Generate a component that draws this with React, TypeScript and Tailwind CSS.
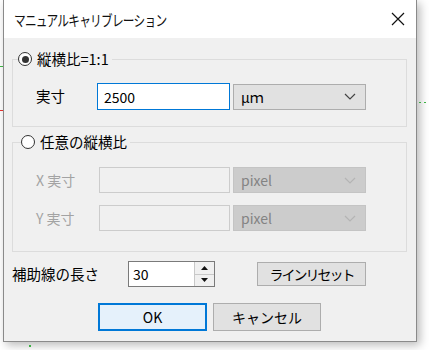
function Radio({ checked }: { checked?: boolean }) {
  return (
    <span className="w-[14px] h-[14px] rounded-full border-[1.5px] border-[#333] bg-white flex items-center justify-center shrink-0">
      {checked && <span className="w-[7px] h-[7px] rounded-full bg-[#333]" />}
    </span>
  );
}

function Chevron({ color }: { color: string }) {
  return (
    <svg width="12" height="7" viewBox="0 0 12 7" fill="none">
      <path d="M1 1l5 5 5-5" stroke={color} strokeWidth="1.2" />
    </svg>
  );
}

function Select({ label, disabled }: { label: string; disabled?: boolean }) {
  return (
    <div
      className={
        disabled
          ? "ml-[3px] w-[133px] h-[26px] bg-[#cccccc] border border-[#c4c4c4] flex items-center justify-between pl-[7px] pr-[9px] text-[14px] text-[#838383]"
          : "ml-[3px] w-[133px] h-[26px] bg-[#e1e1e1] border border-[#adadad] flex items-center justify-between pl-[7px] pr-[9px] text-[14px] text-black"
      }
    >
      <span>{label}</span>
      <Chevron color={disabled ? "#b4b4b4" : "#444"} />
    </div>
  );
}

export default function App() {
  return (
    <div className="relative w-[429px] h-[350px] bg-white overflow-hidden font-['Noto_Sans_CJK_JP',sans-serif] text-black leading-none">
      <div className="absolute left-[0px] top-[66px] w-[3px] h-[1px] bg-[#3cb043]" />
      <div className="absolute left-[0px] top-[110px] w-[3px] h-[1px] bg-[#e0302c]" />
      <div className="absolute left-[29px] top-[345px] w-[2px] h-[2px] bg-[#3cb043]" />
      <div className="absolute left-[419px] top-[102px] w-[2px] h-[1px] bg-[#3cb043]" />
      <div className="absolute left-[424px] top-[102px] w-[2px] h-[1px] bg-[#3cb043]" />

      <div className="ml-[3px] w-[414px] h-[342px] bg-[#f0f0f0] border border-t-0 border-[#8a8a8a] shadow-[3px_3px_9px_rgba(0,0,0,0.28)] flex flex-col">
        <div className="h-[38px] bg-white flex items-center justify-between pl-[10px] pr-[11px]">
          <span className="text-[15px] tracking-[-1px] text-[#111] origin-left scale-x-[0.78] whitespace-nowrap">
            マニュアルキャリブレーション
          </span>
          <svg width="14" height="14" viewBox="0 0 14 14">
            <path d="M1 1l12 12M13 1L1 13" stroke="#111" strokeWidth="1.2" />
          </svg>
        </div>

        <div className="flex-1 pl-[8px] pr-[9px] flex flex-col">
          <fieldset className="mt-[11px] border border-[#dcdcdc] pt-[14px] pb-[16px]">
            <legend className="ml-[5px] pr-[3px]">
              <div className="h-[20px] flex items-center gap-[5px] text-[14.5px]">
                <Radio checked />
                <span>縦横比=1:1</span>
              </div>
            </legend>
            <div className="flex items-center pl-[23px]">
              <span className="w-[61px] text-[14.5px]">実寸</span>
              <div className="w-[133px] h-[27px] bg-white border border-[#0078d7] flex items-center px-[6px] text-[14px]">
                2500
              </div>
              <Select label="μｍ" />
            </div>
          </fieldset>

          <fieldset className="mt-[5px] border border-[#dcdcdc] pt-[15px] pb-[20px]">
            <legend className="ml-[8px] pr-[3px]">
              <div className="h-[20px] flex items-center gap-[5px] text-[14.5px]">
                <Radio />
                <span>任意の縦横比</span>
              </div>
            </legend>
            <div className="flex flex-col gap-[12px] pl-[23px] text-[#a3a3a3]">
              <div className="flex items-center">
                <span className="w-[63px] text-[14px]">X 実寸</span>
                <div className="w-[131px] h-[26px] bg-[#f0f0f0] border border-[#cccccc]" />
                <Select label="pixel" disabled />
              </div>
              <div className="flex items-center">
                <span className="w-[63px] text-[14px]">Y 実寸</span>
                <div className="w-[131px] h-[26px] bg-[#f0f0f0] border border-[#cccccc]" />
                <Select label="pixel" disabled />
              </div>
            </div>
          </fieldset>

          <div className="mt-[9px] flex items-center">
            <span className="w-[116px] text-[14.5px]">補助線の長さ</span>
            <div className="w-[87px] h-[26px] border border-[#7a7a7a] bg-white flex">
              <div className="flex-1 flex items-center px-[4px] text-[14px]">30</div>
              <div className="w-[20px] flex flex-col border-l border-[#c8c8c8]">
                <div className="flex-1 bg-[#f0f0f0] border-b border-[#c8c8c8] flex items-center justify-center">
                  <svg width="7" height="4" viewBox="0 0 7 4">
                    <path d="M0 4h7L3.5 0z" fill="#111" />
                  </svg>
                </div>
                <div className="flex-1 bg-[#f0f0f0] flex items-center justify-center">
                  <svg width="7" height="4" viewBox="0 0 7 4">
                    <path d="M0 0h7L3.5 4z" fill="#111" />
                  </svg>
                </div>
              </div>
            </div>
            <button className="ml-[42px] w-[109px] h-[24px] bg-[#e1e1e1] border border-[#adadad] text-[14px] tracking-[-2px] flex items-center justify-center">
              ラインリセット
            </button>
          </div>

          <div className="mt-[16px] flex items-center pl-[86px] gap-[6px]">
            <button className="w-[109px] h-[28px] bg-[#e5f1fb] border-2 border-[#0078d7] text-[14px] flex items-center justify-center">
              OK
            </button>
            <button className="w-[108px] h-[28px] bg-[#e1e1e1] border border-[#adadad] text-[14px] flex items-center justify-center">
              キャンセル
            </button>
          </div>
        </div>
      </div>
    </div>
  );
}
